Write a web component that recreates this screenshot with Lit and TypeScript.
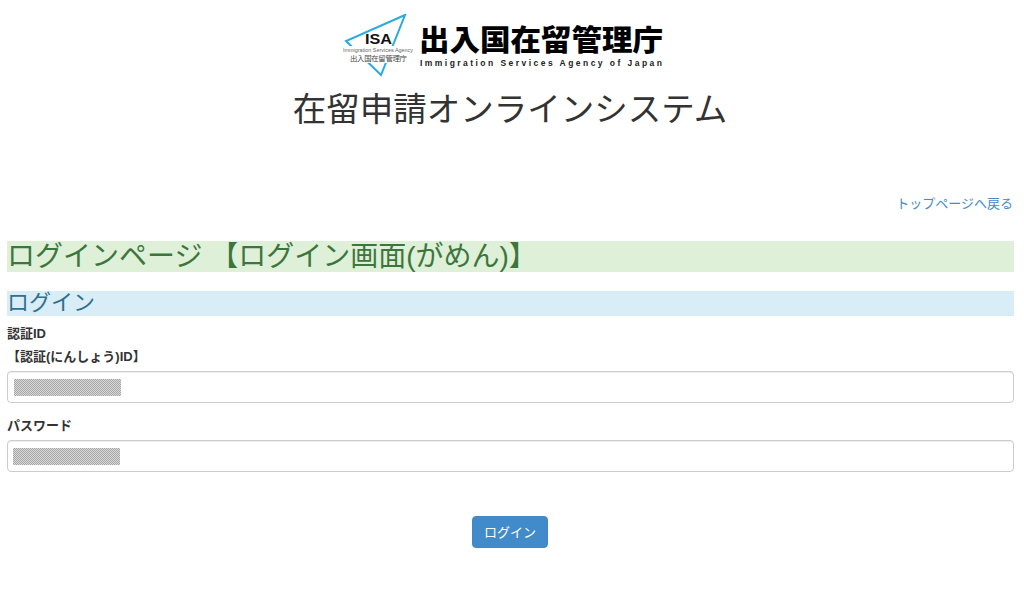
import { LitElement, css, html } from "lit";
import { customElement } from "lit/decorators.js";

@customElement("app-root")
export class AppRoot extends LitElement {
  static styles = css`
    :host {
      display: block;
      height: 589px;
      overflow: hidden;
      background: #fff;
      color: #333;
      font-family: "Liberation Sans", "Noto Sans CJK JP", sans-serif;
      font-size: 13px;
    }

    .brand {
      display: flex;
      justify-content: center;
      padding-top: 14px;
      height: 64px;
    }

    .logo {
      display: block;
      width: 340px;
      height: 64px;
    }

    h1 {
      margin: 10px 0 0;
      padding-right: 4px;
      text-align: center;
      font-size: 33.5px;
      line-height: 44px;
      font-weight: 400;
    }

    .back {
      display: flex;
      justify-content: flex-end;
      padding: 63px 11px 0 0;
      line-height: 18px;
    }

    .back a {
      color: #428bca;
      text-decoration: none;
    }

    main {
      padding: 0 10px 0 7px;
    }

    .page-title {
      margin: 28px 0 0;
      height: 31px;
      line-height: 31px;
      background: #dff0d8;
      color: #3c763d;
      font-size: 28px;
      font-weight: 400;
      white-space: nowrap;
    }

    .section-title {
      margin: 19px 0 0;
      height: 25px;
      line-height: 23px;
      background: #d9edf7;
      color: #31708f;
      font-size: 22px;
      font-weight: 400;
    }

    .field {
      margin-top: 6px;
    }

    .field + .field {
      margin-top: 11px;
    }

    label {
      display: block;
      font-weight: 700;
      font-size: 13px;
      line-height: 23px;
    }

    .input {
      box-sizing: border-box;
      height: 32px;
      margin-top: 3px;
      padding: 7px 6px;
      border: 1px solid #ccc;
      border-radius: 4px;
      box-shadow: inset 0 1px 1px rgba(0, 0, 0, 0.075);
    }

    .mask {
      width: 107px;
      height: 17px;
      background: repeating-conic-gradient(#a6a6a6 0 25%, #d9d9d9 0 50%) 0 0 / 2px 2px;
    }

    .mask.shifted {
      margin-left: -1px;
    }

    .actions {
      display: flex;
      justify-content: center;
      padding: 44px 1px 0 0;
    }

    button {
      width: 76px;
      height: 32px;
      padding: 0 0 2px;
      border: 1px solid #3f87c6;
      border-radius: 4px;
      background: #428bca;
      color: #fff;
      font: inherit;
      font-size: 13px;
    }
  `;

  private renderLogo() {
    return html`<svg class="logo" viewBox="0 0 340 64" aria-label="出入国在留管理庁">
      <path d="M63 1 L4 27 L39 61 Z" fill="none" stroke="#29abe2" stroke-width="2" />
      <rect x="1" y="32" width="71" height="17" fill="#fff" />
      <text x="23" y="30" font-size="15" font-weight="700" fill="#111" font-family="Liberation Sans" textLength="27" lengthAdjust="spacingAndGlyphs">ISA</text>
      <text x="1" y="38" font-size="5.4" fill="#666" font-family="Liberation Sans" textLength="70">Immigration Services Agency</text>
      <text x="8" y="47" font-size="7.4" fill="#444" font-family="Noto Sans CJK JP" textLength="57">出入国在留管理庁</text>
      <text x="77" y="37" font-size="29" font-weight="900" fill="#000" font-family="Noto Sans CJK JP" textLength="244" lengthAdjust="spacingAndGlyphs">出入国在留管理庁</text>
      <text x="78" y="52" font-size="8.5" font-weight="700" fill="#222" font-family="Liberation Sans" textLength="242">Immigration Services Agency of Japan</text>
    </svg>`;
  }

  protected render(): unknown {
    return html`
      <header>
        <div class="brand">${this.renderLogo()}</div>
        <h1>在留申請オンラインシステム</h1>
      </header>
      <div class="back"><a href="#">トップページへ戻る</a></div>
      <main>
        <h2 class="page-title">ログインページ 【ログイン画面(がめん)】</h2>
        <h3 class="section-title">ログイン</h3>
        <div class="field">
          <label>認証ID<br />【認証(にんしょう)ID】</label>
          <div class="input"><div class="mask"></div></div>
        </div>
        <div class="field">
          <label>パスワード</label>
          <div class="input"><div class="mask shifted"></div></div>
        </div>
        <div class="actions"><button>ログイン</button></div>
      </main>
    `;
  }
}
